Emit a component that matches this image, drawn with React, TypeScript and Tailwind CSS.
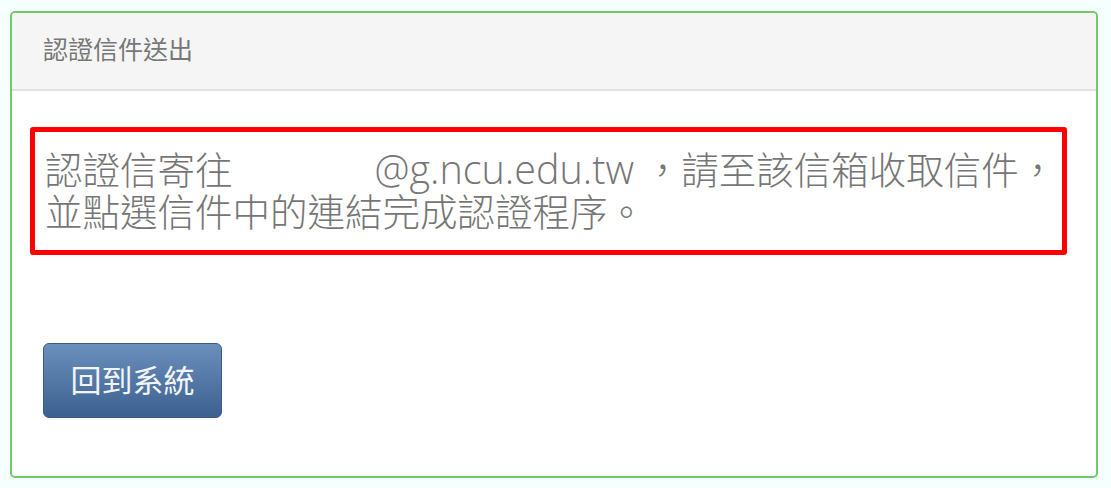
import React from 'react';

const font = { fontFamily: '"Open Sans", "Noto Sans CJK TC", sans-serif' };

export default function App() {
  return (
    <div className="min-h-[488px] w-[1111px] bg-[#f5fffe] pl-[10px] pt-[11px]" style={font}>
      <div className="flex h-[467px] w-[1088px] flex-col overflow-hidden rounded-[5px] border-2 border-[#6fcb62] bg-white">
        <div className="flex h-[78px] items-center border-b-2 border-[#e2e2e2] bg-[#f5f5f5] pl-[31px] pb-[2px]">
          <span className="text-[25px] text-[#777777]">認證信件送出</span>
        </div>
        <div className="flex flex-col pl-[18px] pt-[36px]">
          <div className="w-[1037px] rounded-[3px] border-[5px] border-[#ff0000] pl-[10px] pt-[16px] pb-[17px]">
            <p className="whitespace-nowrap text-[37.5px] font-light leading-[42px] text-[#767676]">
              認證信寄往<span className="inline-block w-[142px]"></span>
              <span className="text-[39.5px]">@g.ncu.edu.tw</span> ，請至該信箱收取信件，
              <br />
              並點選信件中的連結完成認證程序。
            </p>
          </div>
          <button className="mt-[88px] ml-[13px] h-[75px] w-[179px] rounded-[6px] border border-[#3a5c86] bg-gradient-to-b from-[#6b90bc] to-[#3c6190] text-[31px] text-[#f2f4f7]">
            回到系統
          </button>
        </div>
      </div>
    </div>
  );
}
